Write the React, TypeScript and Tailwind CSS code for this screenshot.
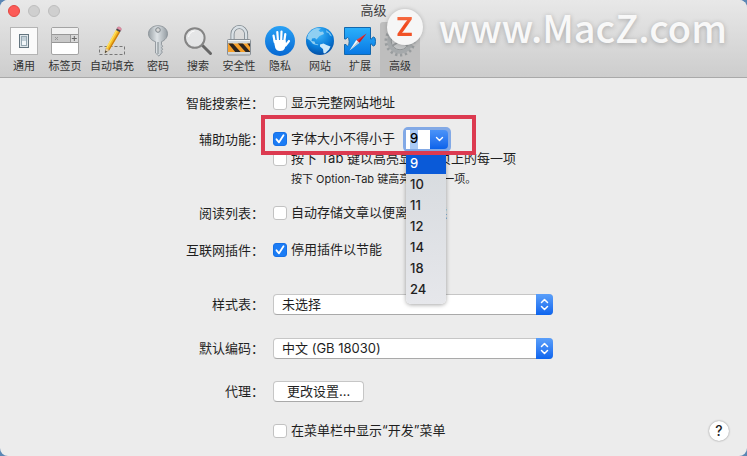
import { useState, type ReactNode } from 'react';
import clsx from 'clsx';

const FONT_SIZES = ['9', '10', '11', '12', '14', '18', '24'];

function SwitchIcon() {
    return (
        <svg viewBox="0 0 32 32" className="size-8" aria-hidden="true">
            <rect x="2.5" y="2.5" width="27" height="27" fill="#fafafa" stroke="#b4b4b4" />
            <rect x="11.5" y="9.5" width="9" height="13" fill="#dfe6ea" stroke="#64757f" />
            <rect x="13.5" y="11.5" width="5" height="9" fill="#c3d0d8" stroke="#96a8b2" />
            <path d="M14 16h4v4h-4z" fill="#f2f7fa" />
        </svg>
    );
}

function TabsIcon() {
    return (
        <svg viewBox="0 0 32 32" className="size-8" aria-hidden="true">
            <rect x="2.5" y="2.5" width="27" height="27" rx="1.5" fill="#fff" stroke="#a3a3a3" />
            <path d="M3 3h26v6H3z" fill="#f1f1f1" />
            <path d="M3 9.500h18.500v8H3z" fill="#c9c9c9" />
            <path d="M21.500 9.500H29v8h-7.500z" fill="#d9d9d9" />
            <path d="M3 9.500h26M3 17.500h26M21.500 9.500v8" stroke="#979797" />
            <path d="M6 12l3 3m0-3l-3 3" stroke="#999" fill="none" />
            <path d="M25.300 11v5M22.800 13.500h5" stroke="#666" fill="none" />
        </svg>
    );
}

function PencilIcon() {
    return (
        <svg viewBox="0 0 32 32" className="size-8" aria-hidden="true">
            <rect x="3.500" y="21.500" width="25" height="8" fill="none" stroke="#777" strokeDasharray="3 2" />
            <path d="M9 28l1-5 3.500 2z" fill="#ecd3a8" stroke="#a58446" strokeWidth=".5" />
            <path d="M9 28l.5-2.500 1.500 1z" fill="#222" />
            <path d="M10 23L20 5l4 2.300L13.500 25z" fill="#f5bd24" />
            <path d="M10 23L20 5l1.300.7-10.200 18z" fill="#ffdf60" />
            <path d="M12.400 24.400L22.800 6.600l1.200.7L13.500 25z" fill="#cb7d11" />
            <path d="M20 5l1-1.800 4 2.300-1 1.800z" fill="#454545" />
            <path d="M21 3.200c1-2.800 5.500-.6 4 2.300z" fill="#e593a9" stroke="#b96b82" strokeWidth=".5" />
        </svg>
    );
}

function KeyIcon() {
    return (
        <svg viewBox="0 0 32 32" className="size-8" aria-hidden="true">
            <defs>
                <linearGradient id="key" x1="0" x2="1">
                    <stop offset="0" stopColor="#99a1a6" />
                    <stop offset=".45" stopColor="#dfe4e7" />
                    <stop offset="1" stopColor="#949ca2" />
                </linearGradient>
            </defs>
            <path
                d="M16 .7c5.500 0 9.500 3.500 9.500 8 0 3.800-2.500 6.500-6 8v3l1.200 1.500-1.200 1.500 1.200 1.500-1.200 1.500.8 1.500-3.300 4-3.500-3.200V16.700c-4-1.300-7-4-7-8 0-4.500 4-8 9.500-8z"
                fill="url(#key)"
                stroke="#858d93"
                strokeWidth=".8"
            />
            <circle cx="16" cy="5" r="2.300" fill="#d6d6d6" stroke="#7d858a" />
            <path d="M16 17v12" stroke="#7d858a" />
        </svg>
    );
}

function SearchIcon() {
    return (
        <svg viewBox="0 0 32 32" className="size-8" aria-hidden="true">
            <path d="M20.500 20.500l8 8" stroke="#666" strokeWidth="3" strokeLinecap="round" />
            <circle cx="12.800" cy="13" r="9.800" fill="#e8eaeb" fillOpacity=".7" stroke="#858585" strokeWidth="2" />
            <path d="M6.500 12q1-5.500 6-6" stroke="#fff" fill="none" />
        </svg>
    );
}

function LockIcon() {
    return (
        <svg viewBox="0 0 32 32" className="size-8" aria-hidden="true">
            <defs>
                <clipPath id="lock">
                    <path d="M5 18.500h22v8.500H5z" />
                </clipPath>
            </defs>
            <path d="M9.500 16V9a6.800 7 0 0 1 13.600 0v7" fill="none" stroke="#7b858c" strokeWidth="4" />
            <path d="M9.500 16V9a6.800 7 0 0 1 13.600 0v7" fill="none" stroke="#d9e0e5" strokeWidth="2.400" />
            <rect x="4.500" y="14.500" width="23" height="15.500" rx="1" fill="#d3d8db" stroke="#899096" />
            <path d="M5 15.500h22" stroke="#f5f6f7" />
            <path d="M5 18.500h22v8.500H5z" fill="#f6a02b" />
            <path d="M5 18h4.500l9 10h-5.500zM14.500 18h5l8 9v1h-4zM24 18h3v4z" fill="#2c2520" clipPath="url(#lock)" />
        </svg>
    );
}

function HandIcon() {
    return (
        <svg viewBox="0 0 32 32" className="size-8" aria-hidden="true">
            <defs>
                <linearGradient id="hand" x1="0" x2="0" y1="0" y2="1">
                    <stop offset="0" stopColor="#29a1f5" />
                    <stop offset="1" stopColor="#0668d3" />
                </linearGradient>
            </defs>
            <circle cx="16" cy="16" r="15" fill="url(#hand)" />
            <g stroke="#fff" strokeWidth="2.200" strokeLinecap="round" fill="none">
                <path d="M10.700 17L9.500 10.500M13.900 15l-.6-8M17.200 15l.3-8.500M20.300 16l1-7M21.500 20.500l3.500-4.500" />
            </g>
            <path d="M9.600 15h11.800l.8 4-1.500 4.500q-1 2.500-4.800 2.500-3.500 0-4.600-3z" fill="#fff" />
        </svg>
    );
}

function GlobeIcon() {
    return (
        <svg viewBox="0 0 32 32" className="size-8" aria-hidden="true">
            <defs>
                <radialGradient id="globe" cx=".45" cy=".25" r=".8">
                    <stop offset="0" stopColor="#3eb7fa" />
                    <stop offset=".6" stopColor="#087bd8" />
                    <stop offset="1" stopColor="#04489d" />
                </radialGradient>
            </defs>
            <circle cx="16" cy="16" r="14" fill="url(#globe)" />
            <path
                d="M4 9.500Q7.500 4 13 3l4 .5-2.500 2 2 1.500 2.500-.5 1 2.500-4.500 2-3 3.500-1.500-1.500-3 .5-.5 2.500 3 .5 1 2.500 3 .5-1 .8-4.500-1.300-3-3.500-3-2z"
                fill="#8fcff2"
            />
            <path d="M16 19.500l3.500-1 3 1.500 4 1.500-1.500 3-4 4-1.500-.5-.5-4-3-2.500z" fill="#cdeafa" />
            <path d="M22 5q4 2 6 6.500l-2-1-1.500-2.500-2-.5z" fill="#7cc6f1" />
        </svg>
    );
}

function ExtensionIcon() {
    return (
        <svg viewBox="0 0 32 32" className="size-8" aria-hidden="true">
            <defs>
                <linearGradient id="puzzle" x1="0" x2="0" y1="0" y2="1">
                    <stop offset="0" stopColor="#2bb0fb" />
                    <stop offset="1" stopColor="#0878e4" />
                </linearGradient>
            </defs>
            <path
                d="M.5 2.500h26v11.500h1.200q.5-2 2-2 1.800 0 1.800 4.500t-1.800 4.500q-1.500 0-2-2h-1.200v10.500H.5V19.500H2q.5 1.500 1.500 1.500 1.700 0 1.700-4.300t-1.700-4.200q-1 0-1.500 1.500H.5z"
                fill="url(#puzzle)"
                stroke="#1267ad"
            />
            <path d="M22.500 8.500L15.300 17.800l-3-2.800z" fill="#e63b3b" />
            <path d="M22.500 8.500L15.300 17.800l-1.500-1.400z" fill="#b91c2b" />
            <path d="M5.500 25.500l6.800-10.500 3 2.800z" fill="#f8fbfd" />
            <path d="M5.500 25.500l8.300-9.100 1.500 1.400z" fill="#b8c7d1" />
        </svg>
    );
}

function GearIcon() {
    return (
        <svg viewBox="0 0 32 32" className="size-8" aria-hidden="true">
            <circle cx="16" cy="16" r="14" fill="none" stroke="#989c9e" strokeWidth="3" strokeDasharray="2.300 2.587" />
            <circle cx="16" cy="16" r="11" fill="none" stroke="#a5a9ab" strokeWidth="3.500" />
            <circle cx="16" cy="16" r="8.800" fill="#c3c5c6" stroke="#8f9395" />
            <path d="M16 16V7M16 16l8 5M16 16l-8 5" stroke="#95999b" strokeWidth="2" />
            <circle cx="16" cy="16" r="3" fill="#999d9f" />
        </svg>
    );
}

const tabs = [
    { label: '通用', icon: <SwitchIcon />, width: 'w-10' },
    { label: '标签页', icon: <TabsIcon />, width: 'w-[42px]' },
    { label: '自动填充', icon: <PencilIcon />, width: 'w-13' },
    { label: '密码', icon: <KeyIcon />, width: 'w-10' },
    { label: '搜索', icon: <SearchIcon />, width: 'w-10' },
    { label: '安全性', icon: <LockIcon />, width: 'w-[42px]' },
    { label: '隐私', icon: <HandIcon />, width: 'w-10' },
    { label: '网站', icon: <GlobeIcon />, width: 'w-10' },
    { label: '扩展', icon: <ExtensionIcon />, width: 'w-10' },
    { label: '高级', icon: <GearIcon />, width: 'w-10', active: true },
];

function Watermark() {
    return (
        <div className="pointer-events-none absolute top-[3px] right-5 flex items-center gap-4">
            <div className="flex size-9 items-center justify-center rounded-full bg-[#f6f6f6] shadow-[0_0_4px_rgba(0,0,0,0.2)]">
                <span className="bg-linear-to-b from-[#fa8a60] via-[#f0481c] via-45% to-[#f25c30] bg-clip-text font-[Inter] text-[26px] leading-9 font-bold text-transparent">
                    Z
                </span>
            </div>
            <span className="font-['Noto_Sans_CJK_SC'] text-[38px] leading-[48px] font-medium text-[#f8f8f8] [text-shadow:0_1px_5px_rgba(0,0,0,0.25)]">
                www.MacZ.com
            </span>
        </div>
    );
}

function Row({ label, className, children }: { label?: string; className?: string; children: ReactNode }) {
    return (
        <div className={clsx('grid grid-cols-[264px_1fr] gap-[9px]', className)}>
            <div className="text-right leading-5">{label}</div>
            <div className="flex flex-col items-start">{children}</div>
        </div>
    );
}

function Checkbox({ label, defaultChecked }: { label: string; defaultChecked?: boolean }) {
    return (
        <label className="flex h-5 items-center gap-1 whitespace-nowrap">
            <span className="relative size-3.5">
                <input
                    type="checkbox"
                    defaultChecked={defaultChecked}
                    className="peer block size-3.5 appearance-none rounded-[3px] border border-[#c2c2c2] bg-white checked:border-[#1670e6] checked:bg-[#1b7cf5]"
                />
                <svg viewBox="0 0 14 14" className="pointer-events-none absolute inset-0 hidden size-3.5 peer-checked:block">
                    <path d="M3.500 7.300l2.500 3 4.500-7" fill="none" stroke="#fff" strokeWidth="1.800" strokeLinecap="round" strokeLinejoin="round" />
                </svg>
            </span>
            {label}
        </label>
    );
}

function Select({ label, options }: { label: string; options: string[] }) {
    return (
        <div className="relative w-[280px]">
            <select
                aria-label={label}
                className="block h-[21px] w-full appearance-none rounded-[4px] border border-[#c6c6c6] border-b-[#a9a9a9] bg-white px-2 leading-[19px]"
            >
                {options.map((option) => (
                    <option key={option}>{option}</option>
                ))}
            </select>
            <div className="pointer-events-none absolute inset-y-0 right-0 flex w-[17px] items-center justify-center rounded-r-[4px] bg-linear-to-b from-[#5a9ffa] to-[#0a64ee]">
                <svg viewBox="0 0 9 13" className="h-[13px] w-[9px]" aria-hidden="true">
                    <path d="M1.500 4.500l3-3 3 3M1.500 8.500l3 3 3-3" fill="none" stroke="#fff" strokeWidth="1.500" strokeLinecap="round" strokeLinejoin="round" />
                </svg>
            </div>
        </div>
    );
}

function FontSizeCombo() {
    const [size, setSize] = useState('9');

    return (
        <div className="relative ml-2">
            <div className="flex h-[25px] w-12 items-stretch rounded-[5px] bg-[#82a9e6] p-[3px]">
                <input
                    type="text"
                    aria-label="字体大小"
                    value={size}
                    autoFocus
                    onFocus={(e) => e.target.select()}
                    onChange={(e) => setSize(e.target.value)}
                    className="w-6 bg-white pl-1 text-[13px] font-medium outline-none selection:bg-[#a9caf5] selection:text-black"
                />
                <button
                    type="button"
                    aria-label="展开"
                    className="flex flex-1 items-center justify-center rounded-r-[4px] bg-linear-to-b from-[#4a93f8] to-[#0a62ea]"
                >
                    <svg viewBox="0 0 9 6" className="h-1.5 w-[9px]" aria-hidden="true">
                        <path d="M1.500 1.500l3 3 3-3" fill="none" stroke="#fff" strokeWidth="1.400" strokeLinecap="round" strokeLinejoin="round" />
                    </svg>
                </button>
            </div>
            <ul
                role="listbox"
                aria-label="字体大小"
                className="absolute top-full left-[3px] z-10 mt-px w-10 overflow-hidden rounded-b-[5px] bg-linear-to-b from-[#d6dade] to-[#e6e7eb] pb-1 font-medium shadow-[0_1px_4px_rgba(0,0,0,0.35)]"
            >
                {FONT_SIZES.map((value) => (
                    <li
                        key={value}
                        role="option"
                        aria-selected={value === size}
                        onClick={() => setSize(value)}
                        className={clsx('h-[21px] pl-1 leading-[21px]', value === size && 'bg-[#0a5ad8] text-white')}
                    >
                        {value}
                    </li>
                ))}
            </ul>
        </div>
    );
}

export default function App() {
    return (
        <div className="min-h-screen bg-[#5b87b5] font-[Inter,'Noto_Sans_CJK_SC',sans-serif] text-[13px] text-[#1f1f1f]" lang="zh-CN">
            <div className="flex min-h-screen flex-col overflow-hidden rounded-lg bg-[#ececec]">
                <header className="relative border-b border-[#a9a9a9] bg-linear-to-b from-[#e8e8e8] to-[#cdcdcd]">
                    <div className="grid h-[22px] grid-cols-[1fr_auto_1fr] items-center">
                        <div className="flex gap-2 pl-2">
                            <button type="button" aria-label="关闭" className="size-3 rounded-full border border-[#e2463f] bg-[#fc5b57]" />
                            <button type="button" aria-label="最小化" className="size-3 rounded-full border border-[#bdbdbd] bg-[#cfcfcf]" />
                            <button type="button" aria-label="缩放" className="size-3 rounded-full border border-[#bdbdbd] bg-[#cfcfcf]" />
                        </div>
                        <h1 className="text-[#3c3c3c]">高级</h1>
                    </div>
                    <nav className="flex pl-1">
                        {tabs.map((tab) => (
                            <button
                                key={tab.label}
                                type="button"
                                className={clsx(
                                    'flex h-[55px] flex-col items-center pt-[3px] text-[11px] leading-[18px] whitespace-nowrap text-[#333]',
                                    tab.width,
                                    tab.active && 'rounded-t-[3px] bg-[#bebebe]',
                                )}
                            >
                                {tab.icon}
                                {tab.label}
                            </button>
                        ))}
                    </nav>
                    <Watermark />
                </header>

                <main className="pt-[15px]">
                    <Row label="智能搜索栏：">
                        <Checkbox label="显示完整网站地址" />
                    </Row>
                    <Row label="辅助功能：" className="mt-4">
                        <div className="relative flex h-5 items-center">
                            <Checkbox label="字体大小不得小于" defaultChecked />
                            <FontSizeCombo />
                            {/* highlight frame */}
                            <div className="pointer-events-none absolute -top-3.5 -left-3 z-20 h-10 w-[215px] border-4 border-[#dc3a50]" />
                        </div>
                        <Checkbox label="按下 Tab 键以高亮显示网页上的每一项" />
                        <p className="pl-[18px] text-[11px] leading-5">按下 Option-Tab 键高亮显示每一项。</p>
                    </Row>
                    <Row label="阅读列表：" className="mt-3.5">
                        <Checkbox label="自动存储文章以便离线阅读" />
                    </Row>
                    <Row label="互联网插件：" className="mt-[17px]">
                        <Checkbox label="停用插件以节能" defaultChecked />
                    </Row>
                    <Row label="样式表：" className="mt-[34px]">
                        <Select label="样式表" options={['未选择']} />
                    </Row>
                    <Row label="默认编码：" className="mt-[23px]">
                        <Select label="默认编码" options={['中文 (GB 18030)']} />
                    </Row>
                    <Row label="代理：" className="mt-[22px]">
                        <button
                            type="button"
                            className="h-[21px] rounded-[4px] border border-[#c6c6c6] border-b-[#a9a9a9] bg-white px-[13px] leading-[19px]"
                        >
                            更改设置...
                        </button>
                    </Row>
                    <Row className="mt-[19px]">
                        <div className="flex w-full items-center justify-between pr-[18px]">
                            <Checkbox label="在菜单栏中显示“开发”菜单" />
                            <button
                                type="button"
                                aria-label="帮助"
                                className="size-5 rounded-full bg-white text-sm leading-5 font-medium shadow-[0_0_2px_rgba(0,0,0,0.45)]"
                            >
                                ?
                            </button>
                        </div>
                    </Row>
                </main>
            </div>
        </div>
    );
}
